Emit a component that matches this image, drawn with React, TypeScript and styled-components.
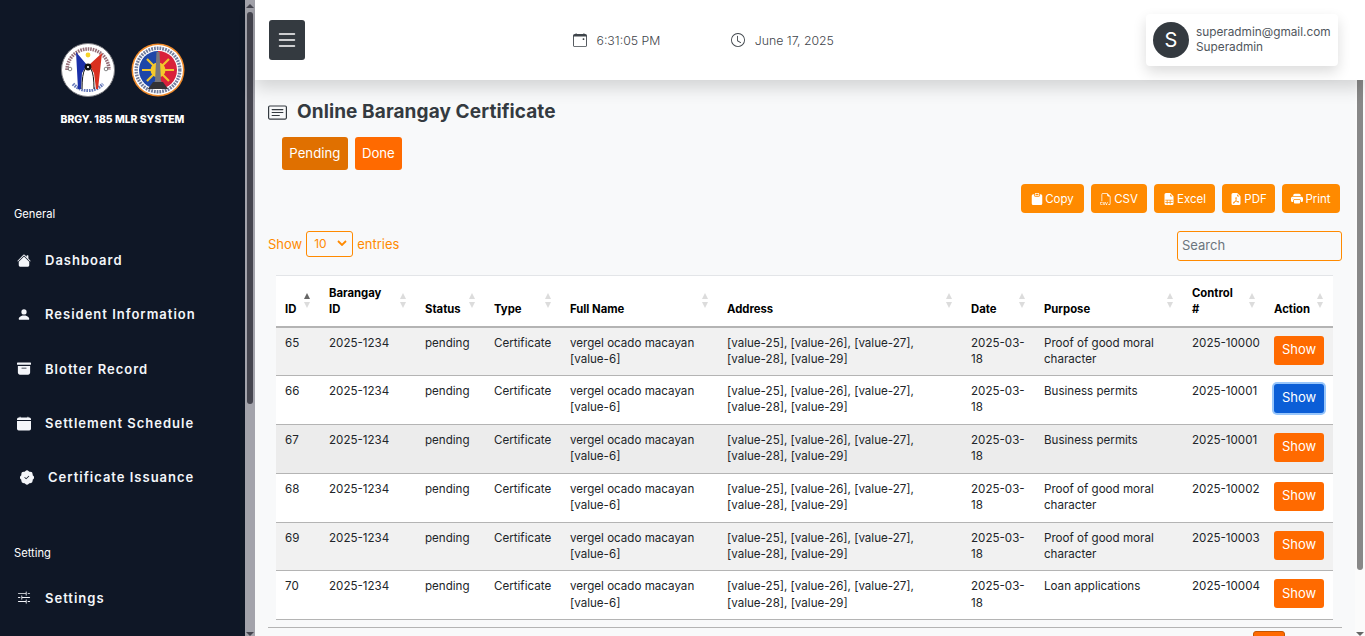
import React from "react";
import styled, { createGlobalStyle } from "styled-components";
import {
  BsHouseFill,
  BsPersonFill,
  BsArchiveFill,
  BsCalendarFill,
  BsPatchCheckFill,
  BsSliders2,
  BsList,
  BsCalendarEvent,
  BsClock,
  BsCardText,
  BsClipboardFill,
  BsFiletypeCsv,
  BsFileEarmarkSpreadsheetFill,
  BsFileEarmarkPdfFill,
  BsPrinterFill,
} from "react-icons/bs";

const GlobalStyle = createGlobalStyle`
  html, body {
    margin: 0;
    height: 100%;
    overflow: hidden;
  }
  body {
    font-family: Inter, "Open Sans", sans-serif;
    background: #f8f9fa;
  }
  * { box-sizing: border-box; }
`;

const Shell = styled.div`
  display: flex;
  width: 1365px;
  height: 636px;
  overflow: hidden;
`;

const Sidebar = styled.aside`
  width: 245px;
  flex: none;
  background: #0f1726;
  color: #fff;
  display: flex;
  flex-direction: column;
`;

const Brand = styled.div`
  display: flex;
  flex-direction: column;
  align-items: center;
  padding-top: 43px;
  height: 207px;
`;

const Logos = styled.div`
  display: flex;
  gap: 16px;
`;

const BrandName = styled.div`
  margin-top: 15px;
  font-size: 10.4px;
  font-weight: 800;
  line-height: 16px;
`;

const SectionLabel = styled.div<{ $top?: number }>`
  font-size: 11.2px;
  line-height: 14px;
  padding-left: 14px;
  margin-top: ${p => p.$top ?? 0}px;
`;

const NavList = styled.nav<{ $top: number }>`
  display: flex;
  flex-direction: column;
  margin-top: ${p => p.$top}px;
`;

const NavItem = styled.a<{ $indent?: boolean }>`
  height: 54.3px;
  display: flex;
  align-items: center;
  padding-left: ${p => (p.$indent ? 20 : 17)}px;
  gap: 14px;
  font-size: 13px;
  font-weight: 600;
  letter-spacing: 1px;
  color: #f4f6fa;
`;

const NavIcon = styled.span`
  width: 14px;
  height: 16px;
  display: flex;
  align-items: center;
  justify-content: center;
  font-size: 15px;
`;

const SideScroll = styled.div`
  width: 10px;
  flex: none;
  background: #a3a3ab;
  display: flex;
  flex-direction: column;
  align-items: center;
`;

const ScrollArrow = styled.div<{ $down?: boolean; $color: string }>`
  width: 0;
  height: 0;
  flex: none;
  border: 4px solid transparent;
  ${p =>
    p.$down
      ? `border-bottom: 0; border-top: 4px solid ${p.$color};`
      : `border-top: 0; border-bottom: 4px solid ${p.$color};`}
`;

const ScrollThumb = styled.div<{ $h: number; $color: string; $flushTop?: boolean }>`
  width: 6px;
  height: ${p => p.$h}px;
  flex: none;
  background: ${p => p.$color};
  border-radius: ${p => (p.$flushTop ? "0 0 3px 3px" : "3px")};
`;

const SideArrowTop = styled(ScrollArrow)`
  margin: 4px 0;
`;

const ScrollSpacer = styled.div`
  flex: 1;
`;

const Main = styled.main`
  flex: 1;
  min-width: 0;
  display: flex;
  flex-direction: column;
`;

const Topbar = styled.header`
  height: 80px;
  flex: none;
  background: #fff;
  box-shadow: 0 8px 16px rgba(0, 0, 0, 0.15);
  display: flex;
  align-items: flex-start;
  padding: 20px 27px 0 14px;
  position: relative;
  z-index: 2;
`;

const MenuButton = styled.button`
  width: 36px;
  height: 40px;
  background: #343a40;
  border: 0;
  border-radius: 3px;
  color: #fff;
  display: flex;
  align-items: center;
  justify-content: center;
  padding: 0;
`;

const Clock = styled.div`
  display: flex;
  align-items: center;
  height: 40px;
  margin-left: 268px;
  gap: 71px;
`;

const ClockItem = styled.span`
  display: flex;
  align-items: center;
  gap: 9.5px;
  font-size: 12.3px;
  font-weight: 300;
  color: #3f454b;
`;

const UserCard = styled.div`
  margin-left: auto;
  margin-top: -6px;
  width: 192px;
  height: 52px;
  background: #fff;
  border-radius: 4px;
  box-shadow: 0 6px 14px rgba(0, 0, 0, 0.14);
  display: flex;
  align-items: center;
  padding-left: 7px;
  gap: 7px;
`;

const Avatar = styled.div`
  width: 36px;
  height: 36px;
  border-radius: 50%;
  background: #343a40;
  color: #fff;
  display: flex;
  align-items: center;
  justify-content: center;
  font-size: 20px;
`;

const UserText = styled.div`
  font-size: 11.8px;
  line-height: 15px;
  color: #50565c;
`;

const Content = styled.div`
  flex: 1;
  display: flex;
  min-height: 0;
`;

const Page = styled.div`
  flex: 1;
  min-width: 0;
  padding: 20px 13px 0 13px;
  display: flex;
  flex-direction: column;
  overflow: hidden;
`;

const MainScroll = styled.div`
  width: 10px;
  flex: none;
  background: #fbfbfb;
  display: flex;
  flex-direction: column;
  align-items: center;
`;

const TitleRow = styled.div`
  display: flex;
  align-items: center;
  gap: 10px;
  height: 24px;
  color: #343a40;
`;

const Title = styled.h1`
  margin: 0;
  font-size: 19px;
  font-weight: 700;
  line-height: 24px;
  letter-spacing: 0.1px;
  color: #343a40;
`;

const TabRow = styled.div`
  display: flex;
  gap: 7px;
  margin: 13px 0 0 14px;
`;

const TabButton = styled.button<{ $active?: boolean }>`
  height: 33px;
  padding: 0 7.3px 2px;
  border: 0;
  border-radius: 3px;
  background: ${p => (p.$active ? "#e07000" : "#ff6a00")};
  color: #fff;
  font-family: inherit;
  font-size: 13.2px;
`;

const ExportRow = styled.div`
  display: flex;
  justify-content: flex-end;
  gap: 7px;
  margin-top: 14px;
  padding-right: 2px;
`;

const ExportButton = styled.button<{ $w: number }>`
  width: ${p => p.$w}px;
  height: 29px;
  border: 0;
  border-radius: 4px;
  background: #ff8a00;
  color: #fff;
  font-family: inherit;
  font-size: 11.5px;
  display: flex;
  align-items: center;
  justify-content: center;
  gap: 2px;
  padding: 0;
`;

const ControlRow = styled.div`
  display: flex;
  align-items: flex-start;
  justify-content: space-between;
  margin-top: 18px;
  color: #ff8a00;
  font-size: 13px;
`;

const Length = styled.label`
  display: flex;
  align-items: center;
  gap: 4px;
`;

const LengthSelect = styled.div`
  width: 47px;
  height: 26px;
  border: 1px solid #ff8a00;
  border-radius: 3px;
  display: flex;
  align-items: center;
  justify-content: space-between;
  padding: 0 5px 2px 7px;
  font-size: 12px;
`;

const SearchInput = styled.input`
  width: 165px;
  height: 30px;
  border: 1px solid #ff8a00;
  border-radius: 3px;
  background: transparent;
  padding: 0 4px 2px;
  font-family: inherit;
  font-size: 13px;
  &::placeholder { color: #6c757d; opacity: 1; }
`;

const Table = styled.table`
  width: 1057px;
  margin: 14px 0 0 8px;
  border-collapse: collapse;
  table-layout: fixed;
  background: #fff;
  font-size: 11.6px;
  color: #212529;
`;

const HeadCell = styled.th`
  position: relative;
  height: 51px;
  padding: 0 9px 9px;
  vertical-align: bottom;
  text-align: left;
  font-size: 11.3px;
  font-weight: 700;
  line-height: 16px;
  white-space: pre-line;
  color: #000;
  border-top: 1px solid #e3e5e8;
  border-bottom: 2px solid #b4b4b4;
`;

const SortMarks = styled.span<{ $on?: boolean }>`
  position: absolute;
  right: 10px;
  bottom: 18px;
  display: flex;
  flex-direction: column;
  gap: 3px;
  &::before, &::after {
    content: "";
    width: 0;
    height: 0;
    border: 3px solid transparent;
  }
  &::before {
    border-top: 0;
    border-bottom: 6px solid ${p => (p.$on ? "#666" : "#dcdcdc")};
  }
  &::after {
    border-bottom: 0;
    border-top: 6px solid #dcdcdc;
  }
`;

const Row = styled.tr<{ $bg: string }>`
  height: 48.9px;
  background: ${p => p.$bg};
`;

const Cell = styled.td`
  padding: 7px 9px 0;
  vertical-align: top;
  line-height: 16.4px;
  border-bottom: 1px solid #b4b4b4;
  overflow-wrap: break-word;
`;

const AddressCell = styled(Cell)`
  white-space: pre-line;
`;

const ControlCell = styled(Cell)`
  white-space: nowrap;
`;

const ActionCell = styled(Cell)`
  padding-top: 8px;
`;

const ShowButton = styled.button<{ $focus?: boolean }>`
  display: block;
  width: 50px;
  height: 29px;
  border: 0;
  border-radius: 3px;
  padding: 0 0 2px;
  background: ${p => (p.$focus ? "#0b5ed7" : "#ff6a00")};
  box-shadow: ${p => (p.$focus ? "0 0 0 2px #98c6fb" : "none")};
  color: #fff;
  font-family: inherit;
  font-size: 13px;
`;

const FootRule = styled.div`
  margin-top: 7px;
  height: 1px;
  flex: none;
  background: #b4b4b4;
`;

const PageButtons = styled.div`
  display: flex;
  justify-content: flex-end;
  padding-right: 57px;
  margin-top: 3px;
`;

const PageChip = styled.div`
  width: 32px;
  height: 20px;
  flex: none;
  background: #ff6a00;
  border: 1px solid #c25500;
  border-radius: 3px;
`;

const SealOne: React.FC = () => (
  <svg width="54" height="54" viewBox="0 0 54 54">
    <circle cx="27" cy="27" r="26.5" fill="#fff" stroke="#7d7d82" strokeWidth="1" />
    <path d="M6 27 A21 21 0 0 1 48 27" fill="none" stroke="#7a4a55" strokeWidth="3.5" strokeDasharray="1.6 0.9" opacity="0.8" />
    <path d="M12 41 A21 21 0 0 0 42 41" fill="none" stroke="#3c55a8" strokeWidth="3.5" strokeDasharray="1.6 0.9" opacity="0.8" />
    <circle cx="27" cy="12" r="2.4" fill="#f6d32a" />
    <path d="M15 9 L26 22 L21 30 L20 46 H17 Z" fill="#1a2fa8" />
    <path d="M41 10 L28 22 L33 30 L35 46 H37 Z" fill="#d9301f" />
    <path d="M21 46 Q21 31 24 26 H30 Q33 31 33 46 Z" fill="#fff" />
    <path d="M21 46 Q21 31 24 26 M33 46 Q33 31 30 26" fill="none" stroke="#111" strokeWidth="1" />
    <circle cx="27" cy="24" r="3.4" fill="#111" />
    <circle cx="27" cy="24" r="1.1" fill="#fff" />
    <circle cx="9" cy="26" r="1.8" fill="none" stroke="#555" strokeWidth="0.7" />
    <circle cx="45" cy="26" r="1.8" fill="none" stroke="#555" strokeWidth="0.7" />
  </svg>
);

const SealTwo: React.FC = () => (
  <svg width="54" height="54" viewBox="0 0 54 54">
    <circle cx="27" cy="27" r="26.5" fill="#f08a2a" />
    <circle cx="27" cy="27" r="25" fill="#fff" />
    <circle cx="27" cy="27" r="21.8" fill="none" stroke="#4d5c84" strokeWidth="3.4" strokeDasharray="1.8 1" opacity="0.8" />
    <path d="M27 8 A19 19 0 0 0 27 46 Z" fill="#1d46a8" />
    <path d="M27 8 A19 19 0 0 1 27 46 Z" fill="#d9213a" />
    <path d="M11 27 H43 M16 16 L38 38 M38 16 L16 38" stroke="#f0c52a" strokeWidth="2.2" />
    <circle cx="27" cy="27" r="7.5" fill="#f5c92b" />
    <path d="M25.5 9 H28.5 L30 38 L37 46 H17 L24 38 Z" fill="#77777c" />
    <path d="M22 39 H32 L37 46 H17 Z" fill="#333337" />
  </svg>
);

const navItems = [
  { label: "Dashboard", icon: <BsHouseFill /> },
  { label: "Resident Information", icon: <BsPersonFill /> },
  { label: "Blotter Record", icon: <BsArchiveFill /> },
  { label: "Settlement Schedule", icon: <BsCalendarFill /> },
  { label: "Certificate Issuance", icon: <BsPatchCheckFill />, indent: true },
];

const exportsList = [
  { label: "Copy", w: 63, icon: <BsClipboardFill size={12} /> },
  { label: "CSV", w: 56, icon: <BsFiletypeCsv size={12} /> },
  { label: "Excel", w: 61, icon: <BsFileEarmarkSpreadsheetFill size={12} /> },
  { label: "PDF", w: 53, icon: <BsFileEarmarkPdfFill size={12} /> },
  { label: "Print", w: 58, icon: <BsPrinterFill size={12} /> },
];

const columns = [
  { label: "ID", w: 44 },
  { label: "Barangay\nID", w: 96 },
  { label: "Status", w: 69 },
  { label: "Type", w: 76 },
  { label: "Full Name", w: 157 },
  { label: "Address", w: 244 },
  { label: "Date", w: 73 },
  { label: "Purpose", w: 148 },
  { label: "Control\n#", w: 82 },
  { label: "Action", w: 68 },
];

const rows = [
  { id: 65, purpose: "Proof of good moral character", control: "2025-10000", bg: "#f1f1f1" },
  { id: 66, purpose: "Business permits", control: "2025-10001", bg: "#fff" },
  { id: 67, purpose: "Business permits", control: "2025-10001", bg: "#ececec" },
  { id: 68, purpose: "Proof of good moral character", control: "2025-10002", bg: "#fff" },
  { id: 69, purpose: "Proof of good moral character", control: "2025-10003", bg: "#f1f1f1" },
  { id: 70, purpose: "Loan applications", control: "2025-10004", bg: "#fff" },
];

const App: React.FC = () => (
  <>
    <GlobalStyle />
    <Shell>
      <Sidebar>
        <Brand>
          <Logos>
            <SealOne />
            <SealTwo />
          </Logos>
          <BrandName>BRGY. 185 MLR SYSTEM</BrandName>
        </Brand>
        <SectionLabel>General</SectionLabel>
        <NavList $top={12}>
          {navItems.map(item => (
            <NavItem key={item.label} $indent={item.indent}>
              <NavIcon>{item.icon}</NavIcon>
              {item.label}
            </NavItem>
          ))}
        </NavList>
        <SectionLabel $top={42}>Setting</SectionLabel>
        <NavList $top={10}>
          <NavItem>
            <NavIcon><BsSliders2 /></NavIcon>
            Settings
          </NavItem>
        </NavList>
      </Sidebar>
      <SideScroll>
        <SideArrowTop $color="#45454f" />
        <ScrollThumb $h={392} $color="#45454f" />
        <ScrollSpacer />
        <ScrollArrow $down $color="#45454f" />
      </SideScroll>
      <Main>
        <Topbar>
          <MenuButton aria-label="Menu"><BsList size={24} /></MenuButton>
          <Clock>
            <ClockItem><BsCalendarEvent size={14} />6:31:05 PM</ClockItem>
            <ClockItem><BsClock size={14} />June 17, 2025</ClockItem>
          </Clock>
          <UserCard>
            <Avatar>S</Avatar>
            <UserText>
              superadmin@gmail.com
              <br />
              Superadmin
            </UserText>
          </UserCard>
        </Topbar>
        <Content>
          <Page>
            <TitleRow>
              <BsCardText size={19} />
              <Title>Online Barangay Certificate</Title>
            </TitleRow>
            <TabRow>
              <TabButton $active>Pending</TabButton>
              <TabButton>Done</TabButton>
            </TabRow>
            <ExportRow>
              {exportsList.map(b => (
                <ExportButton key={b.label} $w={b.w}>{b.icon}{b.label}</ExportButton>
              ))}
            </ExportRow>
            <ControlRow>
              <Length>
                Show
                <LengthSelect>
                  10
                  <svg width="10" height="6" viewBox="0 0 10 6" fill="none">
                    <path d="M1 1L5 5L9 1" stroke="#ff8a00" strokeWidth="1.8" />
                  </svg>
                </LengthSelect>
                entries
              </Length>
              <SearchInput placeholder="Search" />
            </ControlRow>
            <Table>
              <colgroup>
                {columns.map(c => <col key={c.label} width={c.w} />)}
              </colgroup>
              <thead>
                <tr>
                  {columns.map((c, i) => (
                    <HeadCell key={c.label}>
                      {c.label}
                      <SortMarks $on={i === 0} />
                    </HeadCell>
                  ))}
                </tr>
              </thead>
              <tbody>
                {rows.map(r => (
                  <Row key={r.id} $bg={r.bg}>
                    <Cell>{r.id}</Cell>
                    <Cell>2025-1234</Cell>
                    <Cell>pending</Cell>
                    <Cell>Certificate</Cell>
                    <Cell>vergel ocado macayan [value-6]</Cell>
                    <AddressCell>{"[value-25], [value-26], [value-27],\n[value-28], [value-29]"}</AddressCell>
                    <Cell>2025-03-18</Cell>
                    <Cell>{r.purpose}</Cell>
                    <ControlCell>{r.control}</ControlCell>
                    <ActionCell><ShowButton $focus={r.id === 66}>Show</ShowButton></ActionCell>
                  </Row>
                ))}
              </tbody>
            </Table>
            <FootRule />
            <PageButtons><PageChip /></PageButtons>
          </Page>
          <MainScroll>
            <ScrollThumb $h={490} $color="#888" $flushTop />
            <ScrollSpacer />
            <ScrollArrow $down $color="#666" />
          </MainScroll>
        </Content>
      </Main>
    </Shell>
  </>
);

export default App;
